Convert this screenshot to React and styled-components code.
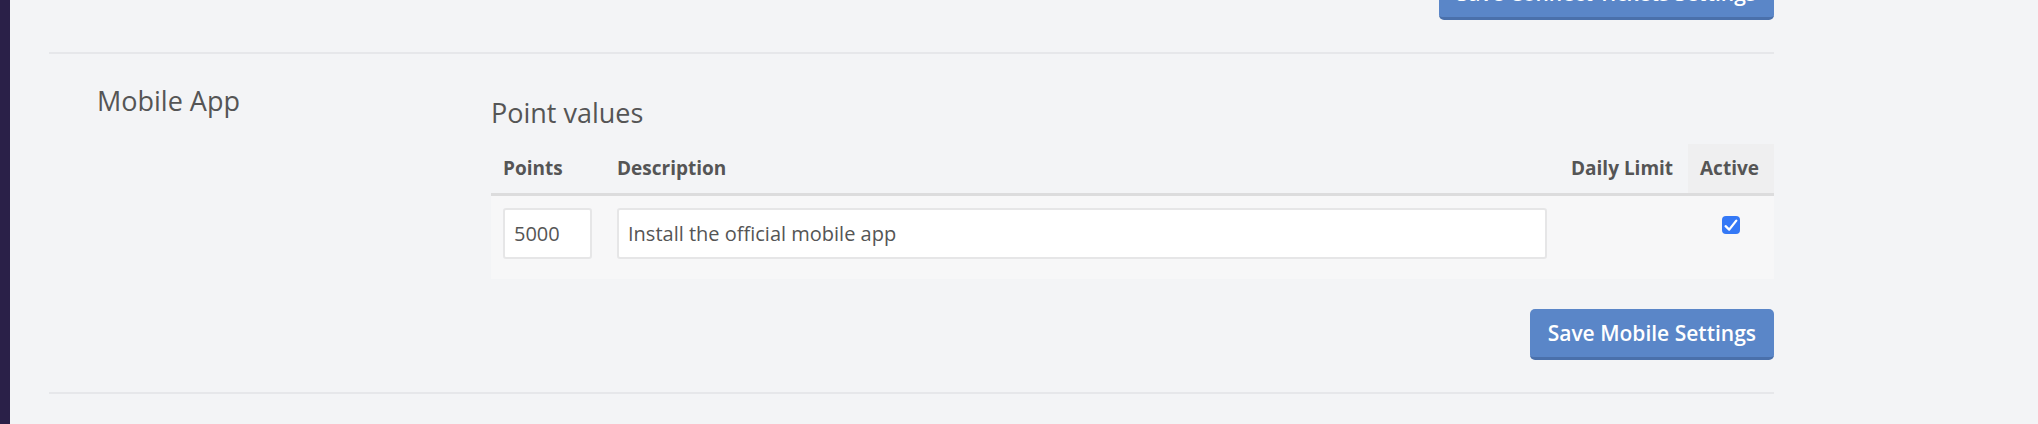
import React from 'react'
import styled, { createGlobalStyle } from 'styled-components'

const GlobalStyle = createGlobalStyle`
   body {
      margin: 0;
      background: #f3f4f6;
      font-family: 'Open Sans', 'Liberation Sans', sans-serif;
      color: #555;
   }
`

const App = () => {
   return (
      <Page>
         <GlobalStyle />
         <Sidebar />
         <Main>
            <PrevFooter>
               <Button>Save Connect Tickets Settings</Button>
            </PrevFooter>
            <Divider />
            <Section>
               <SectionLabel>Mobile App</SectionLabel>
               <SectionBody>
                  <Heading>Point values</Heading>
                  <Table>
                     <colgroup>
                        <col style={{ width: '114px' }} />
                        <col />
                        <col style={{ width: '129px' }} />
                        <col style={{ width: '86px' }} />
                     </colgroup>
                     <thead>
                        <tr>
                           <Th>Points</Th>
                           <Th>Description</Th>
                           <Th>Daily Limit</Th>
                           <Th $shaded>Active</Th>
                        </tr>
                     </thead>
                     <tbody>
                        <tr>
                           <Td>
                              <Input defaultValue='5000' $width='89px' />
                           </Td>
                           <Td>
                              <Input defaultValue='Install the official mobile app' />
                           </Td>
                           <Td />
                           <Td $center>
                              <Check>
                                 <svg width='18' height='18' viewBox='0 0 18 18'>
                                    <path
                                       d='M3.6 10.2 L7.2 13.6 L14.3 4.6'
                                       fill='none'
                                       stroke='#fff'
                                       strokeWidth='2.3'
                                       strokeLinecap='round'
                                       strokeLinejoin='round'
                                    />
                                 </svg>
                              </Check>
                           </Td>
                        </tr>
                     </tbody>
                  </Table>
                  <Actions>
                     <Button>Save Mobile Settings</Button>
                  </Actions>
               </SectionBody>
            </Section>
            <Divider />
         </Main>
      </Page>
   )
}

const Page = styled.div`
   display: flex;
   min-height: 424px;
`
const Sidebar = styled.div`
   width: 10px;
   flex-shrink: 0;
   background: #2a2048;
`
const Main = styled.div`
   width: 1725px;
   padding-left: 39px;
`
const PrevFooter = styled.div`
   height: 20px;
   overflow: hidden;
   display: flex;
   justify-content: flex-end;
   align-items: flex-end;
`
const Divider = styled.div`
   height: 2px;
   background: #e6e7ea;
   margin-top: 32px;
`
const Section = styled.div`
   display: grid;
   grid-template-columns: 442px 1fr;
   padding-top: 32px;
`
const SectionLabel = styled.div`
   padding-left: 48px;
   font-size: 27px;
   line-height: 1.1;
   color: #555;
`
const SectionBody = styled.div`
   display: flex;
   flex-direction: column;
`
const Heading = styled.h3`
   margin: 12px 0 16px;
   font-size: 27px;
   line-height: 1.1;
   font-weight: 400;
   color: #555;
`
const Table = styled.table`
   width: 100%;
   table-layout: fixed;
   border-collapse: collapse;
   border-spacing: 0;
`
const Th = styled.th`
   box-sizing: border-box;
   height: 51px;
   padding: 0 12px;
   text-align: left;
   vertical-align: middle;
   font-size: 19px;
   font-weight: 700;
   color: #555;
   white-space: nowrap;
   background: ${(p) => (p.$shaded ? '#efeff0' : 'transparent')};
   border-bottom: 3px solid #dcdcdd;
`
const Td = styled.td`
   box-sizing: border-box;
   padding: 12px 12px 20px;
   background: #f7f7f8;
   vertical-align: top;
   text-align: ${(p) => (p.$center ? 'center' : 'left')};
`
const Input = styled.input`
   box-sizing: border-box;
   display: block;
   width: ${(p) => p.$width || '100%'};
   height: 51px;
   padding: 0 9px;
   border: 2px solid #e6e6e7;
   border-radius: 3px;
   background: #fff;
   font-family: 'Open Sans', 'Liberation Sans', sans-serif;
   font-size: 20px;
   color: #555;
   outline: none;
`
const Check = styled.span`
   display: inline-flex;
   width: 18px;
   height: 18px;
   margin-top: 8px;
   border-radius: 4px;
   background: #3478f6;
`
const Actions = styled.div`
   display: flex;
   justify-content: flex-end;
   margin-top: 30px;
`
const Button = styled.button`
   box-sizing: border-box;
   height: 51px;
   padding: 0 18px;
   border: none;
   border-bottom: 3px solid #4a70ab;
   border-radius: 5px;
   background: #5a86c8;
   color: #fff;
   font-family: 'Open Sans', 'Liberation Sans', sans-serif;
   font-size: 21px;
   font-weight: 600;
   white-space: nowrap;
   flex-shrink: 0;
`

export default App
